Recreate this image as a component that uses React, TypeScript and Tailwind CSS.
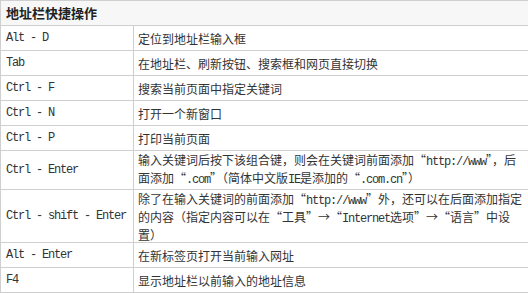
import React from 'react';

const M = ({ children }: { children: React.ReactNode }) => (
    <span className="font-['Liberation_Mono',monospace] text-[12px] tracking-[-1.2px]">{children}</span>
);

type Row = { key: string; h: string; desc: React.ReactNode };

const rows: Row[] = [
    { key: 'Alt - D', h: 'h-[25px]', desc: '定位到地址栏输入框' },
    { key: 'Tab', h: 'h-[25px]', desc: '在地址栏、刷新按钮、搜索框和网页直接切换' },
    { key: 'Ctrl - F', h: 'h-[25px]', desc: '搜索当前页面中指定关键词' },
    { key: 'Ctrl - N', h: 'h-[25px]', desc: '打开一个新窗口' },
    { key: 'Ctrl - P', h: 'h-[25px]', desc: '打印当前页面' },
    {
        key: 'Ctrl - Enter',
        h: 'h-[39px]',
        desc: (
            <>
                输入关键词后按下该组合键，则会在关键词前面添加“<M>http://www</M>”，后
                <br />
                面添加“<M>.com</M>”（简体中文版<M>IE</M>是添加的“<M>.com.cn</M>”）
            </>
        ),
    },
    {
        key: 'Ctrl - shift - Enter',
        h: 'h-[53px]',
        desc: (
            <>
                除了在输入关键词的前面添加“<M>http://www</M>”外，还可以在后面添加指定
                <br />
                的内容（指定内容可以在“工具”→“<M>Internet</M>选项”→“语言”中设
                <br />
                置）
            </>
        ),
    },
    { key: 'Alt - Enter', h: 'h-[25px]', desc: '在新标签页打开当前输入网址' },
    { key: 'F4', h: 'h-[25px]', desc: '显示地址栏以前输入的地址信息' },
];

const App = () => {
    return (
        <div className="w-[528px] h-[294px] overflow-hidden bg-white text-[#333] font-['Noto_Sans_CJK_SC',sans-serif] text-[12px]">
            {/* Header */}
            <div className="h-[26px] border-t border-b border-l border-[#cfcfcf] bg-[#f7f7f7] flex items-center pl-[5px]">
                <span className="font-bold text-[13px] text-[#222]">地址栏快捷操作</span>
            </div>

            {/* Shortcut rows */}
            {rows.map((r) => (
                <div key={r.key} className={`${r.h} flex border-b border-l border-[#cfcfcf]`}>
                    <div className="w-[133px] shrink-0 border-r border-[#cfcfcf] flex items-center pl-[5px] whitespace-nowrap">
                        <M>{r.key}</M>
                    </div>
                    <div className="flex-1 flex items-center pl-[4px] leading-[15px] whitespace-nowrap">
                        <div>{r.desc}</div>
                    </div>
                </div>
            ))}
        </div>
    );
};

export default App;
